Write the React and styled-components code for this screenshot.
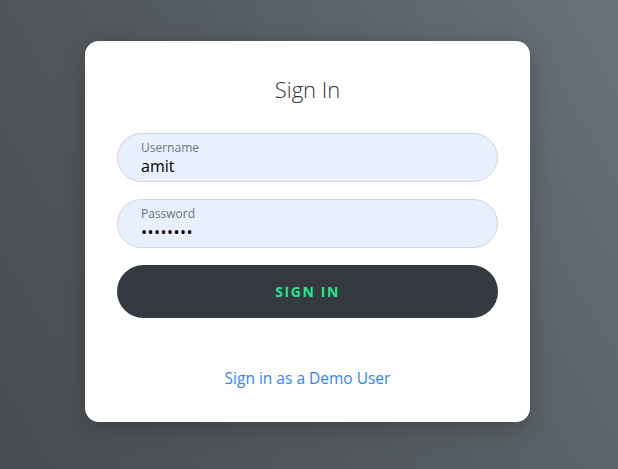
import React from 'react';
import styled, { createGlobalStyle } from 'styled-components';

const GlobalStyle = createGlobalStyle`
  html, body {
    margin: 0;
    padding: 0;
    height: 100%;
  }
  body {
    font-family: "Open Sans", "Noto Sans", "Liberation Sans", sans-serif;
  }
  #root {
    height: 100%;
  }
`;

const Page = styled.div`
  min-height: 100%;
  box-sizing: border-box;
  display: flex;
  justify-content: center;
  align-items: flex-start;
  padding: 41px 3px 0 0;
  background: linear-gradient(60deg, #464c50 0%, #555c61 50%, #68727a 100%);
`;

const Card = styled.form`
  width: 445px;
  box-sizing: border-box;
  padding: 35px 32px 32px;
  background: #fff;
  border-radius: 14px;
  box-shadow: 0 6px 24px rgba(0, 0, 0, 0.22);
  display: flex;
  flex-direction: column;
`;

const Title = styled.h1`
  margin: 0 0 31px;
  font-size: 22px;
  line-height: 26px;
  font-weight: 300;
  color: #333;
  text-align: center;
`;

const Field = styled.label`
  display: flex;
  flex-direction: column;
  height: 49px;
  box-sizing: border-box;
  padding: 7px 23px 0;
  margin-bottom: 17px;
  background: #e8f0fe;
  border: 1px solid #cfd6df;
  border-radius: 25px;
`;

const FieldLabel = styled.span`
  font-size: 12px;
  line-height: 14px;
  color: #6c757d;
`;

const FieldInput = styled.input`
  border: none;
  outline: none;
  background: transparent;
  padding: 0;
  margin-top: 1px;
  font-family: inherit;
  font-size: 16px;
  line-height: 20px;
  color: #000;
  letter-spacing: ${({ type }) => (type === 'password' ? '0.5px' : 'normal')};
`;

const SubmitButton = styled.button`
  height: 53px;
  width: 100%;
  border: none;
  border-radius: 27px;
  background: #343a40;
  color: #22e88c;
  font-family: inherit;
  font-size: 14px;
  font-weight: 700;
  letter-spacing: 1.6px;
  text-transform: uppercase;
  cursor: pointer;
`;

const DemoLink = styled.a`
  display: block;
  margin-top: 48px;
  text-align: center;
  font-size: 15.5px;
  line-height: 24px;
  color: #3483fa;
  text-decoration: none;
  cursor: pointer;
`;

export default function App() {
  return (
    <>
      <GlobalStyle />
      <Page>
        <Card onSubmit={(e) => e.preventDefault()}>
          <Title>Sign In</Title>
          <Field>
            <FieldLabel>Username</FieldLabel>
            <FieldInput type="text" defaultValue="amit" />
          </Field>
          <Field>
            <FieldLabel>Password</FieldLabel>
            <FieldInput type="password" defaultValue="password" />
          </Field>
          <SubmitButton type="submit">Sign In</SubmitButton>
          <DemoLink>Sign in as a Demo User</DemoLink>
        </Card>
      </Page>
    </>
  );
}
